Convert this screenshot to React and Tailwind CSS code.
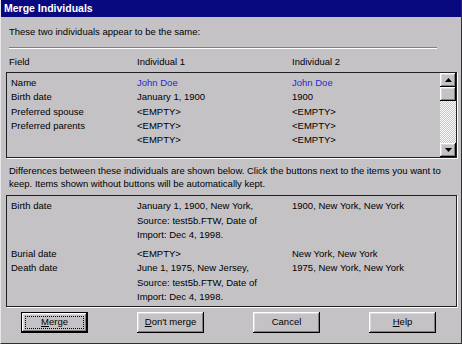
import React from "react";

const raised =
  "shadow-[inset_-1px_-1px_#000000,inset_1px_1px_#ffffff,inset_-2px_-2px_#808080,inset_2px_2px_#dcdadc]";

function Btn({ children, isDefault }) {
  if (isDefault) {
    return (
      <div className="w-[67px] h-[21px] border border-black bg-[#c5c2c5]">
        <div className={`w-full h-full p-[3px] ${raised}`}>
          <div className="w-full h-full border border-dotted border-black flex items-center justify-center">
            {children}
          </div>
        </div>
      </div>
    );
  }
  return (
    <div className={`w-[67px] h-[21px] flex items-center justify-center bg-[#c5c2c5] ${raised}`}>
      {children}
    </div>
  );
}

function Arrow({ down }) {
  return (
    <svg width="7" height="4" viewBox="0 0 7 4">
      {down ? (
        <polygon points="0,0 7,0 3.5,4" fill="#000" />
      ) : (
        <polygon points="0,4 7,4 3.5,0" fill="#000" />
      )}
    </svg>
  );
}

function Row({ a, b, c, blue }) {
  return (
    <div className="flex h-[14.25px] items-center">
      <div className="w-[126px] shrink-0">{a}</div>
      <div className={`w-[155px] shrink-0 ${blue ? "text-[#2828d4]" : ""}`}>{b}</div>
      <div className={`${blue ? "text-[#2828d4]" : ""}`}>{c}</div>
    </div>
  );
}

function DRow({ a, b, c }) {
  return (
    <div className="flex leading-[14.5px]">
      <div className="w-[126px] shrink-0">{a}</div>
      <div className="w-[155px] shrink-0">
        {b.map((l, i) => (
          <div key={i}>{l}</div>
        ))}
      </div>
      <div>{c}</div>
    </div>
  );
}

export default function App() {
  return (
    <div className="w-[462px] h-[344px] bg-[#c5c2c5] flex flex-col border-l border-l-[#e8e6e8] border-r border-r-[#303030] border-b border-b-[#303030] font-['Liberation_Sans',Arial,sans-serif] text-[9.5px] text-black overflow-hidden">
      <div className="h-[17px] shrink-0 bg-[#08087f] text-white font-bold text-[10.5px] pl-[3px] flex items-center">
        Merge Individuals
      </div>

      <div className="mt-[8px] pl-[8px] leading-[13px]">These two individuals appear to be the same:</div>

      <div className="mt-[9px] ml-[8px] w-[428px] h-[2px] border-t border-t-[#808080] border-b border-b-white" />

      <div className="mt-[6px] pl-[8px] flex leading-[13px]">
        <div className="w-[128px]">Field</div>
        <div className="w-[155px]">Individual 1</div>
        <div>Individual 2</div>
      </div>

      <div className="mt-[4px] ml-[5px] w-[451px] h-[86px] border border-[#202020] shadow-[1px_1px_0_#ffffff] flex">
        <div className="flex-1 pl-[4px] pt-[3px]">
          <Row a="Name" b="John Doe" c="John Doe" blue />
          <Row a="Birth date" b="January 1, 1900" c="1900" />
          <Row a="Preferred spouse" b="<EMPTY>" c="<EMPTY>" />
          <Row a="Preferred parents" b="<EMPTY>" c="<EMPTY>" />
          <Row a="" b="<EMPTY>" c="<EMPTY>" />
        </div>
        <div className="w-[16px] flex flex-col">
          <div className={`h-[14px] flex items-center justify-center ${raised}`}>
            <Arrow />
          </div>
          <div className={`h-[14px] ${raised}`} />
          <div className="flex-1 bg-[repeating-conic-gradient(#ffffff_0_25%,#c5c2c5_0_50%)] bg-[length:2px_2px]" />
          <div className={`h-[14px] flex items-center justify-center ${raised}`}>
            <Arrow down />
          </div>
        </div>
      </div>

      <div className="mt-[6px] pl-[8px] leading-[13px]">
        Differences between these individuals are shown below. Click the buttons next to the items you want to
        <br />
        keep. Items shown without buttons will be automatically kept.
      </div>

      <div className="mt-[5px] ml-[5px] w-[451px] h-[112px] border border-[#202020] shadow-[1px_1px_0_#ffffff] pl-[4px] pt-[3px]">
        <DRow
          a="Birth date"
          b={["January 1, 1900, New York,", "Source: test5b.FTW, Date of", "Import: Dec 4, 1998."]}
          c="1900, New York, New York"
        />
        <div className="h-[4px]" />
        <DRow a="Burial date" b={["<EMPTY>"]} c="New York, New York" />
        <DRow
          a="Death date"
          b={["June 1, 1975, New Jersey,", "Source: test5b.FTW, Date of", "Import: Dec 4, 1998."]}
          c="1975, New York, New York"
        />
      </div>

      <div className="mt-[5px] ml-[20px] flex gap-[49px]">
        <Btn isDefault>
          <span><span className="underline">M</span>erge</span>
        </Btn>
        <Btn>
          <span><span className="underline">D</span>on't merge</span>
        </Btn>
        <Btn>Cancel</Btn>
        <Btn>
          <span><span className="underline">H</span>elp</span>
        </Btn>
      </div>
    </div>
  );
}
